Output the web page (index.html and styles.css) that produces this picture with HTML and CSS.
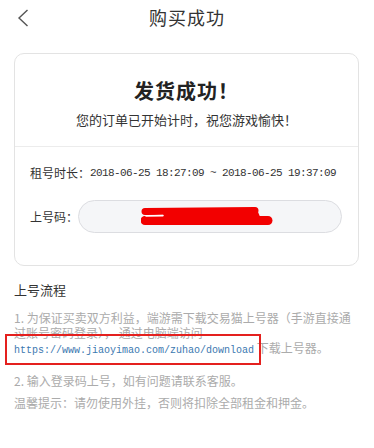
FILE: index.html
```html
<!DOCTYPE html>
<html lang="zh-CN">
<head>
<meta charset="utf-8">
<title>购买成功</title>
<link rel="stylesheet" href="styles.css">
</head>
<body>
<div class="page">
  <header class="topbar">
    <a class="back" href="#" aria-label="返回">
      <svg width="12" height="18" viewBox="0 0 12 18"><path d="M10.5 1 L2 9 L10.5 17" fill="none" stroke="#555" stroke-width="1.4"/></svg>
    </a>
    <h1 class="title">购买成功</h1>
    <span></span>
  </header>

  <section class="card">
    <div class="card-top">
      <h2 class="success">发货成功！</h2>
      <p class="sub">您的订单已开始计时，祝您游戏愉快！</p>
    </div>
    <div class="card-body">
      <div class="row">
        <span class="label">租号时长：</span><span class="mono">2018-06-25 18:27:09 ~ 2018-06-25 19:37:09</span>
      </div>
      <div class="row code-row">
        <span class="label">上号码：</span>
        <div class="pill">
          <svg class="redact" width="134" height="20" viewBox="0 0 134 20">
            <path d="M4 4.5 L114 3.5" stroke="#f20000" stroke-width="7" stroke-linecap="round"/>
            <path d="M4 13.5 L127 13.5" stroke="#f20000" stroke-width="9" stroke-linecap="round"/>
            <path d="M22 6 L117 5 L120 12 L22 12 Z" fill="#f20000"/>
            <path d="M5 9 L22 8.6" stroke="#fff" stroke-width="1.6" stroke-linecap="round"/>
          </svg>
        </div>
      </div>
    </div>
  </section>

  <section class="flow">
    <h3 class="flow-title">上号流程</h3>
    <p class="step">1. 为保证买卖双方利益，端游需下载交易猫上号器（手游直接通过账号密码登录）， 通过电脑端访问 <a class="link" href="#">https://www.jiaoyimao.com/zuhao/download</a> 下载上号器。</p>
    <p class="step step2">2. 输入登录码上号，如有问题请联系客服。</p>
    <p class="step tip">温馨提示：请勿使用外挂，否则将扣除全部租金和押金。</p>
  </section>
</div>
</body>
</html>
```

FILE: styles.css
```css
* { box-sizing: border-box; }
html, body { margin: 0; padding: 0; background: #fff; }
body {
  font-family: "Noto Sans CJK SC", "Liberation Sans", sans-serif;
  color: #333;
}
.page { width: 374px; }

.topbar {
  display: grid;
  grid-template-columns: 1fr auto 1fr;
  align-items: center;
  height: 53px;
  padding: 0 0 19px 0;
}
.back { display: flex; padding-left: 17px; padding-top: 1px; }
.title {
  margin: 0;
  font-size: 18px;
  font-weight: 400;
  line-height: 22px;
  color: #333;
  letter-spacing: 1px;
}

.card {
  margin: 0 15px 0 14px;
  border: 1px solid #e3e3e3;
  border-radius: 10px;
}
.card-top {
  height: 93px;
  border-bottom: 1px solid #ececec;
  padding-top: 24px;
  text-align: center;
}
.success {
  margin: 0;
  font-size: 20px;
  line-height: 25px;
  font-weight: 700;
  color: #222;
  letter-spacing: 1px;
}
.sub {
  margin: 8px 0 0 0;
  font-size: 13px;
  line-height: 18px;
  color: #333;
}
.card-body {
  padding: 17px 0 32px 15px;
}
.row {
  display: flex;
  align-items: center;
  font-size: 12px;
  line-height: 18px;
  color: #333;
}
.label { white-space: nowrap; }
.mono {
  font-family: "Liberation Mono", monospace;
  font-size: 11px;
  letter-spacing: -0.6px;
  color: #333;
}
.code-row { margin-top: 18px; }
.pill {
  width: 264px;
  height: 33px;
  border: 1px solid #dcdde1;
  border-radius: 17px;
  background: #f5f6f8;
  display: flex;
  align-items: center;
}
.redact { margin-left: 62px; margin-top: 1px; }

.flow { padding: 0 20px 0 14px; }
.flow-title {
  margin: 15px 0 0 0;
  font-size: 13px;
  line-height: 18px;
  font-weight: 400;
  color: #333;
}
.step {
  margin: 11px 0 0 0;
  font-size: 12px;
  line-height: 15px;
  color: #ababab;
}
.step2 { margin-top: 15px; }
.tip { margin-top: 7px; }
.link {
  position: relative;
  font-family: "Liberation Mono", monospace;
  font-size: 10px;
  color: #3b78b0;
  text-decoration: none;
}
.link::after {
  content: "";
  position: absolute;
  left: -9px;
  right: -7px;
  top: -11px;
  bottom: -9px;
  border: 2px solid #e4201e;
}
```
